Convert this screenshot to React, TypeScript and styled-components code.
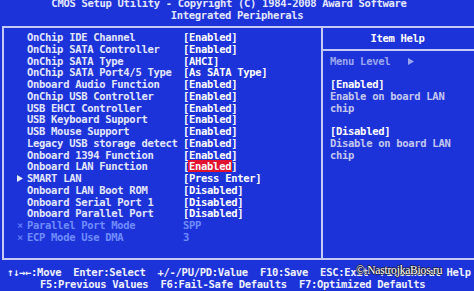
import styled, { createGlobalStyle } from "styled-components";

// bios screen colours
const BLUE = "#1d33da";
const LINE = "#c3caf6";
const TEXT = "#e2e6ff";
const DIM = "#6f8cff";
const HELP = "#c2c7ee";

const GlobalStyle = createGlobalStyle`
    html, body {
        margin: 0;
        padding: 0;
        background: ${BLUE};
        overflow: hidden;
    }
`;

// whole monitor picture
const Screen = styled.div`
    position: relative;
    width: 474px;
    height: 291px;
    overflow: hidden;
    background: ${BLUE};
    font-family: "DejaVu Sans Mono", "Liberation Mono", monospace;
    font-weight: bold;
    font-size: 10.5px;
    letter-spacing: -0.3px;
    line-height: 11.75px;
    color: ${TEXT};
    display: flex;
    flex-direction: column;
`;

const Header = styled.header`
    margin-top: -3px;
    height: 29px;
    display: flex;
    flex-direction: column;
`;

const HeaderLine = styled.div<{ $shift?: number }>`
    text-align: center;
    white-space: pre;
    line-height: 12px;
    padding-right: ${(p) => p.$shift ?? 0}px;
`;

// the framed area with settings and help
const Frame = styled.div`
    box-sizing: border-box;
    margin-left: 2px;
    width: 480px;
    height: 234px;
    border: 2px solid ${LINE};
    display: flex;
`;

const SettingsPanel = styled.div`
    width: 319px;
    border-right: 2px solid ${LINE};
    padding: 4px 0 0 13px;
    box-sizing: border-box;
    display: flex;
    flex-direction: column;
`;

const Row = styled.div<{ $dim?: boolean }>`
    display: grid;
    grid-template-columns: 10px 156px 1fr;
    height: 11.75px;
    white-space: pre;
    color: ${(p) => (p.$dim ? DIM : TEXT)};
`;

const Marker = styled.span`
    display: flex;
    align-items: center;
    font-weight: normal;
`;

const Value = styled.span<{ $dim?: boolean }>`
    color: ${(p) => (p.$dim ? DIM : "#ffffff")};
`;

const Selected = styled.span`
    background: #e3122e;
    color: #ffffff;
    padding: 0 1px;
    margin: 0 -1px;
`;

const HelpPanel = styled.div`
    flex: 1;
    padding-top: 5px;
    display: flex;
    flex-direction: column;
`;

const HelpTitle = styled.div`
    height: 11.75px;
    text-align: center;
    padding-right: 8px;
    color: #ffffff;
`;

const HelpRule = styled.div`
    height: 2px;
    margin: 4px 0 4.75px;
    background: ${LINE};
`;

const HelpLine = styled.div<{ $tone?: "white" | "grey" | "menu" }>`
    height: 11.75px;
    padding-left: 7px;
    white-space: pre;
    color: ${(p) =>
        p.$tone === "white" ? "#ffffff" : p.$tone === "menu" ? "#9aa6ee" : HELP};
    display: flex;
    align-items: center;
`;

const Footer = styled.footer`
    padding-top: 7px;
    display: flex;
    flex-direction: column;
    color: #eef0ff;
`;

const FooterLine = styled.div<{ $indent: number }>`
    white-space: pre;
    padding-left: ${(p) => p.$indent}px;
    height: 11.5px;
    line-height: 11.5px;
`;

// site watermark stamped on the photo
const Watermark = styled.div`
    position: absolute;
    left: 356px;
    top: 265px;
    font-family: "Liberation Serif", serif;
    font-weight: normal;
    font-size: 11.5px;
    color: #ffffff;
    text-shadow: -1px 0 #202030, 1px 0 #202030, 0 -1px #202030, 0 1px #202030;
    letter-spacing: -0.2px;
`;

function Arrow({ color }: { color: string }) {
    return (
        <svg width="6" height="7" viewBox="0 0 6 7">
            <polygon points="0,0 6,3.5 0,7" fill={color} />
        </svg>
    );
}

type Item = { label: string; value: string; mark?: "arrow" | "x"; dim?: boolean; active?: boolean };

const items: Item[] = [
    { label: "OnChip IDE Channel", value: "[Enabled]" },
    { label: "OnChip SATA Controller", value: "[Enabled]" },
    { label: "OnChip SATA Type", value: "[AHCI]" },
    { label: "OnChip SATA Port4/5 Type", value: "[As SATA Type]" },
    { label: "Onboard Audio Function", value: "[Enabled]" },
    { label: "OnChip USB Controller", value: "[Enabled]" },
    { label: "USB EHCI Controller", value: "[Enabled]" },
    { label: "USB Keyboard Support", value: "[Enabled]" },
    { label: "USB Mouse Support", value: "[Enabled]" },
    { label: "Legacy USB storage detect", value: "[Enabled]" },
    { label: "Onboard 1394 Function", value: "[Enabled]" },
    { label: "Onboard LAN Function", value: "Enabled", active: true },
    { label: "SMART LAN", value: "[Press Enter]", mark: "arrow" },
    { label: "Onboard LAN Boot ROM", value: "[Disabled]" },
    { label: "Onboard Serial Port 1", value: "[Disabled]" },
    { label: "Onboard Parallel Port", value: "[Disabled]" },
    { label: "Parallel Port Mode", value: "SPP", mark: "x", dim: true },
    { label: "ECP Mode Use DMA", value: "3", mark: "x", dim: true },
];

export default function App() {
    return (
        <>
            <GlobalStyle />
            <Screen>
                <Header>
                    <HeaderLine $shift={16}>CMOS Setup Utility - Copyright (C) 1984-2008 Award Software</HeaderLine>
                    <HeaderLine>Integrated Peripherals</HeaderLine>
                </Header>
                <Frame>
                    <SettingsPanel>
                        {items.map((it) => (
                            <Row key={it.label} $dim={it.dim}>
                                <Marker>
                                    {it.mark === "arrow" && <Arrow color="#e8ecff" />}
                                    {it.mark === "x" && "×"}
                                </Marker>
                                <span>{it.label}</span>
                                <Value $dim={it.dim}>
                                    {it.active ? (
                                        <>
                                            [<Selected>{it.value}</Selected>]
                                        </>
                                    ) : (
                                        it.value
                                    )}
                                </Value>
                            </Row>
                        ))}
                    </SettingsPanel>
                    <HelpPanel>
                        <HelpTitle>Item Help</HelpTitle>
                        <HelpRule />
                        <HelpLine $tone="menu">
                            {"Menu Level   "}
                            <Arrow color="#9aa6ee" />
                        </HelpLine>
                        <HelpLine />
                        <HelpLine $tone="white">[Enabled]</HelpLine>
                        <HelpLine>Enable on board LAN</HelpLine>
                        <HelpLine>chip</HelpLine>
                        <HelpLine />
                        <HelpLine $tone="white">[Disabled]</HelpLine>
                        <HelpLine>Disable on board LAN</HelpLine>
                        <HelpLine>chip</HelpLine>
                    </HelpPanel>
                </Frame>
                <Footer>
                    <FooterLine $indent={7}>
                        {"↑↓→←:Move  Enter:Select  +/-/PU/PD:Value  F10:Save  ESC:Exit  F1:General Help"}
                    </FooterLine>
                    <FooterLine $indent={40}>
                        {"F5:Previous Values  F6:Fail-Safe Defaults  F7:Optimized Defaults"}
                    </FooterLine>
                </Footer>
                <Watermark>©.NastrojkaBios.ru</Watermark>
            </Screen>
        </>
    );
}
